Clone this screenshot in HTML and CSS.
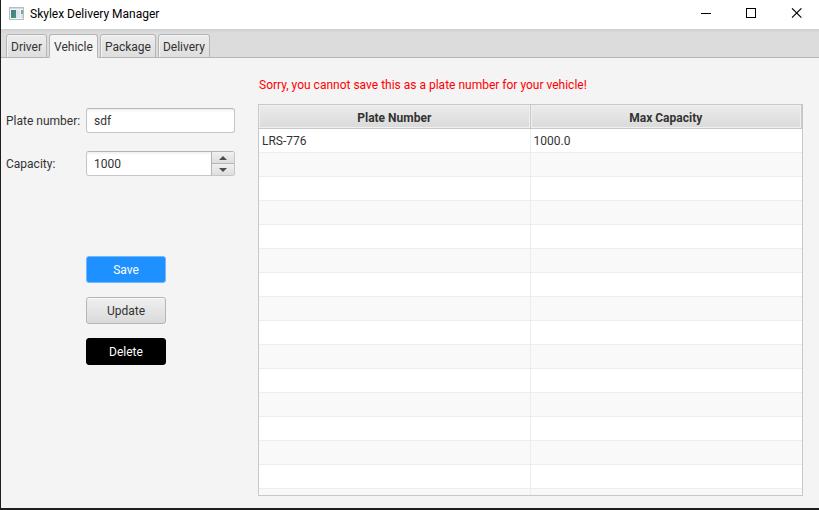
FILE: index.html
```html
<!DOCTYPE html>
<html lang="en">
<head>
<meta charset="utf-8">
<title>Skylex Delivery Manager</title>
<link rel="stylesheet" href="styles.css">
</head>
<body>
<div class="window">
  <header class="titlebar">
    <svg class="app-icon" width="15" height="13" viewBox="0 0 15 13" aria-hidden="true">
      <defs><linearGradient id="pane" x1="0" y1="0" x2="1" y2="1"><stop offset="0" stop-color="#3f78a0"/><stop offset="1" stop-color="#479a69"/></linearGradient></defs>
      <rect x="0.5" y="0.5" width="14" height="12" fill="#f4f5f6" stroke="#b9bdc0"/>
      <rect x="1" y="1" width="13" height="1" fill="#d5d8da"/>
      <rect x="2" y="3" width="5" height="8" fill="url(#pane)"/>
      <rect x="7" y="3" width="4" height="8" fill="#dfe6ee"/>
      <rect x="12" y="3" width="2" height="4" fill="#78a89c"/>
      <rect x="12" y="7" width="2" height="4" fill="#d3dce0"/>
    </svg>
    <h1 class="title">Skylex Delivery Manager</h1>
    <div class="window-controls">
      <button type="button" class="window-button" aria-label="Minimize"><svg width="11" height="11" viewBox="0 0 11 11"><path d="M0 5.5h10" stroke="#000" fill="none"/></svg></button>
      <button type="button" class="window-button" aria-label="Maximize"><svg width="11" height="11" viewBox="0 0 11 11"><rect x="0.5" y="0.5" width="9" height="9" stroke="#000" fill="none"/></svg></button>
      <button type="button" class="window-button" aria-label="Close"><svg width="11" height="11" viewBox="0 0 11 11"><path d="M1 0.3l9.4 9.4M10.4 0.3L1 9.7" stroke="#000" stroke-width="1.1" fill="none"/></svg></button>
    </div>
  </header>
  <nav class="tabs" role="tablist">
    <button type="button" class="tab" role="tab">Driver</button>
    <button type="button" class="tab tab-active" role="tab" aria-selected="true">Vehicle</button>
    <button type="button" class="tab" role="tab">Package</button>
    <button type="button" class="tab" role="tab">Delivery</button>
  </nav>
  <main class="content">
    <form class="form">
      <label class="label" for="plate">Plate number:</label>
      <input class="field" id="plate" type="text" value="sdf">
      <label class="label" for="capacity">Capacity:</label>
      <div class="spinner">
        <input class="spinner-input" id="capacity" type="text" inputmode="numeric" value="1000">
        <div class="spinner-buttons">
          <button type="button" class="step" aria-label="Increase"><svg width="8" height="4" viewBox="0 0 8 4"><path d="M0 4L4 0L8 4z" fill="#4d4d4d"/></svg></button>
          <button type="button" class="step" aria-label="Decrease"><svg width="8" height="4" viewBox="0 0 8 4"><path d="M0 0L4 4L8 0z" fill="#4d4d4d"/></svg></button>
        </div>
      </div>
      <div class="actions">
        <button type="button" class="button button-save">Save</button>
        <button type="button" class="button">Update</button>
        <button type="button" class="button button-delete">Delete</button>
      </div>
    </form>
    <section class="vehicles">
      <p class="error" role="alert">Sorry, you cannot save this as a plate number for your vehicle!</p>
      <div class="table-view">
        <table class="table">
          <thead><tr><th>Plate Number</th><th>Max Capacity</th></tr></thead>
          <tbody>
            <tr><td>LRS-776</td><td>1000.0</td></tr>
            <tr><td></td><td></td></tr>
            <tr><td></td><td></td></tr>
            <tr><td></td><td></td></tr>
            <tr><td></td><td></td></tr>
            <tr><td></td><td></td></tr>
            <tr><td></td><td></td></tr>
            <tr><td></td><td></td></tr>
            <tr><td></td><td></td></tr>
            <tr><td></td><td></td></tr>
            <tr><td></td><td></td></tr>
            <tr><td></td><td></td></tr>
            <tr><td></td><td></td></tr>
            <tr><td></td><td></td></tr>
            <tr><td></td><td></td></tr>
            <tr><td></td><td></td></tr>
          </tbody>
        </table>
      </div>
    </section>
  </main>
</div>
</body>
</html>
```
FILE: styles.css
```css
* { box-sizing: border-box; }

body {
  margin: 0;
  background: #1e1e20;
  color: #333;
  font: 12px/16px Roboto, "Noto Sans", sans-serif;
}

button, input { font: inherit; color: inherit; }

.window {
  display: flex;
  flex-direction: column;
  height: 100vh;
  border: solid #1e1e20;
  border-width: 0 0 2px 1px;
  background: #f4f4f4;
}

.titlebar {
  display: flex;
  align-items: center;
  height: 29px;
  padding: 0 0 2px 8px;
  background: #fff;
  color: #000;
}

.app-icon { margin-right: 6px; }

.title {
  flex: 1;
  margin: 0;
  font-size: 12px;
  font-weight: 400;
}

.window-controls { display: flex; }

.window-button {
  display: flex;
  align-items: center;
  justify-content: center;
  width: 45px;
  height: 27px;
  padding: 0;
  border: 0;
  background: none;
}

.tabs {
  display: flex;
  align-items: flex-end;
  gap: 2px;
  height: 29px;
  padding-left: 5px;
  background: linear-gradient(#ccd0d0, #dcdcdc 4px);
  box-shadow: inset 0 -1px #b5b5b5;
}

.tab {
  height: 24px;
  padding: 2px 4px 0;
  border: 1px solid #b5b5b5;
  border-radius: 3px 3px 0 0;
  background: linear-gradient(#ececec, #dedede);
  box-shadow: inset 1px 1px #f4f4f4;
}

.tab-active {
  border-bottom-color: #f4f4f4;
  background: #f4f4f4;
}

.content {
  display: flex;
  flex: 1;
  min-height: 0;
  padding: 19px 16px 12px 5px;
}

.form {
  display: grid;
  grid-template-columns: 80px 149px;
  grid-auto-rows: min-content;
  row-gap: 18px;
  align-items: center;
  width: 252px;
  padding-top: 31px;
}

.label { white-space: nowrap; }

.field, .spinner {
  width: 100%;
  height: 25px;
  border: 1px solid #c6c6c6;
  border-top-color: #b5b5b5;
  border-radius: 3px;
  background: #fff;
}

.field {
  padding: 0 7px;
  box-shadow: inset 0 2px 2px #f2f2f2;
}

.spinner {
  display: flex;
  overflow: hidden;
}

.spinner-input {
  flex: 1;
  min-width: 0;
  padding: 0 7px;
  border: 0;
  background: none;
  box-shadow: inset 0 2px 2px #f2f2f2;
}

.spinner-buttons {
  display: flex;
  flex-direction: column;
  width: 23px;
  border-left: 1px solid #b5b5b5;
}

.step {
  display: flex;
  flex: 1;
  align-items: center;
  justify-content: center;
  padding: 0;
  border: 0;
  background: linear-gradient(#f0f0f0, #dedede);
}

.step + .step { border-top: 1px solid #b5b5b5; }

.actions {
  display: flex;
  grid-column: 2;
  flex-direction: column;
  gap: 14px;
  width: 80px;
  padding-top: 62px;
}

.button {
  height: 27px;
  padding: 0;
  border: 1px solid #b5b5b5;
  border-radius: 3px;
  background: linear-gradient(#efefef, #dadada);
  box-shadow: inset 0 1px #fafafa;
}

.button-save {
  border-color: #6fb8fe;
  background: #1e90ff;
  box-shadow: none;
  color: #fff;
}

.button-delete {
  border-color: #000;
  background: #000;
  box-shadow: none;
  color: #fff;
}

.vehicles {
  display: flex;
  flex: 1;
  flex-direction: column;
  min-width: 0;
}

.error {
  margin: 0 0 11px;
  padding-left: 1px;
  color: #f00;
}

.table-view {
  flex: 1;
  min-height: 0;
  overflow: hidden;
  border: 1px solid #c8c8c8;
  background: #fff;
}

.table {
  width: 100%;
  border-collapse: separate;
  border-spacing: 0;
  table-layout: fixed;
}

.table th {
  height: 24px;
  padding: 2px 0 0;
  border: solid #c8c8c8;
  border-width: 0 1px 1px 0;
  background: linear-gradient(#ececec, #dadada);
  box-shadow: inset 0 0 0 1px #f0f0f0;
  font-weight: 700;
}

.table td {
  height: 24px;
  padding: 0 3px;
  border: solid #ededed;
  border-width: 0 1px 1px 0;
}

.table td:last-child { border-right: 0; }

.table tbody tr:nth-child(even) { background: #f9f9f9; }
```
